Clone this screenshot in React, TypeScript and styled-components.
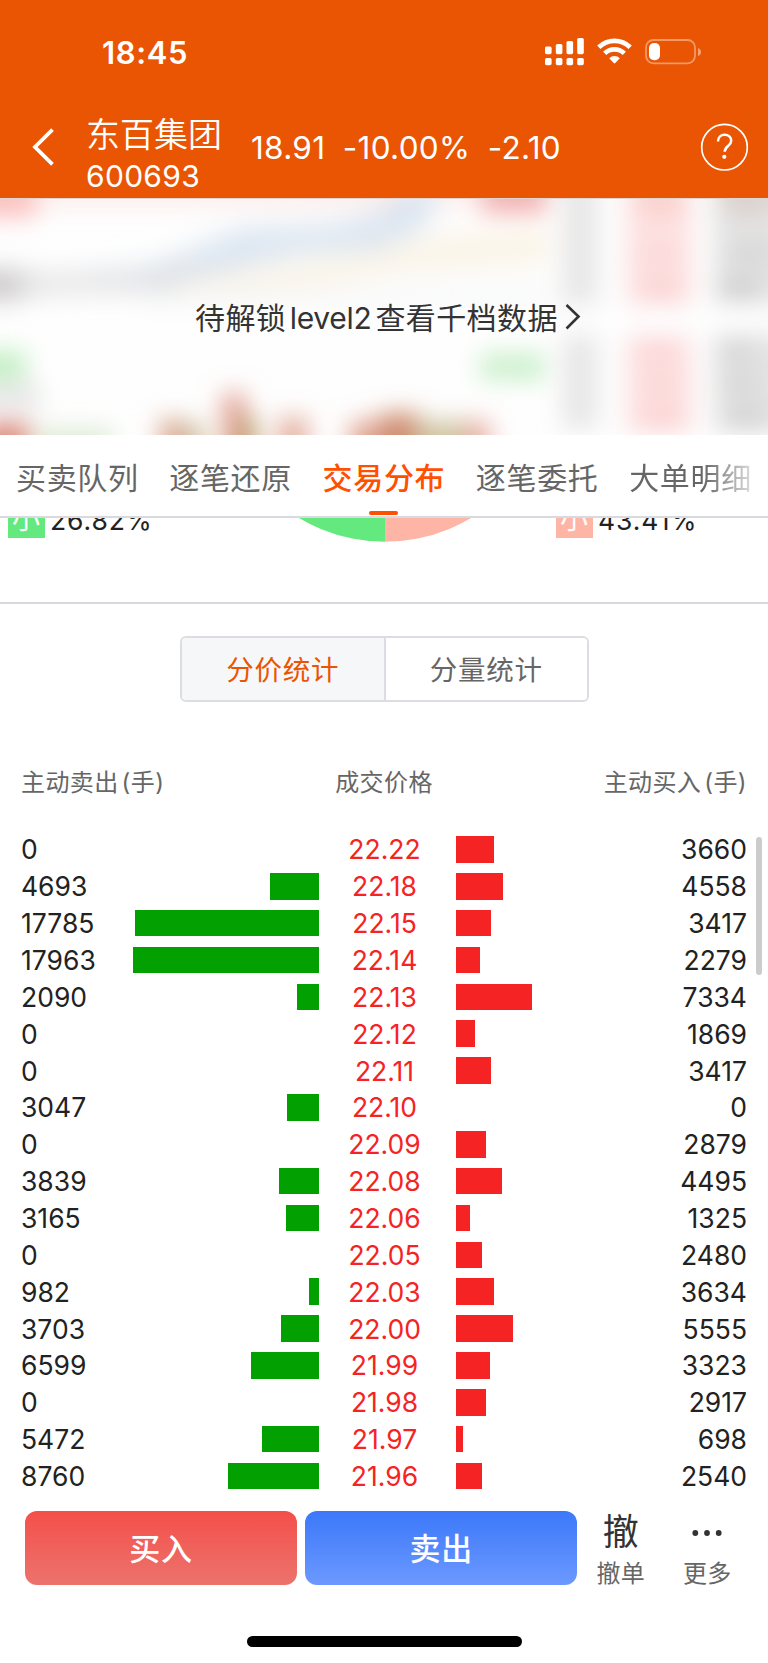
import React from 'react';
import styled, { createGlobalStyle, css } from 'styled-components';

const GlobalStyle = createGlobalStyle`
  * { box-sizing: border-box; }
  body {
    margin: 0;
    background: #fff;
    font-family: Inter, "Noto Sans CJK SC", sans-serif;
    color: #222;
  }
`;

const Screen = styled.main`
  width: 768px;
  height: 1663px;
  display: flex;
  flex-direction: column;
  overflow: hidden;
  background: #fff;
  white-space: nowrap;
`;

/* ---------- header ---------- */

const Header = styled.header`
  flex: none;
  height: 199px;
  background: #ea5504;
  border-bottom: 1px solid #dcd5d3;
  color: #fff;
`;

const StatusBar = styled.div`
  height: 98px;
  padding: 8px 66px 0 102px;
  display: flex;
  align-items: center;
  justify-content: space-between;
`;

const Clock = styled.time`
  font-size: 31px;
  font-weight: 600;
  line-height: 40px;
  letter-spacing: 0.6px;
`;

const StatusIcons = styled.svg`
  display: block;
  margin-top: -3px;
`;

const NavBar = styled.div`
  height: 100px;
  padding: 0 20px 0 32px;
  display: flex;
  align-items: center;
`;

const TitleBlock = styled.div`
  width: 164px;
  margin-left: 31px;
  padding-top: 14px;
`;

const StockName = styled.div`
  font-size: 34px;
  font-weight: 350;
  line-height: 41px;
`;

const StockCode = styled.div`
  font-size: 30px;
  line-height: 42px;
  letter-spacing: 0.3px;
`;

const Quote = styled.div`
  flex: 1;
  display: flex;
  gap: 17.5px;
  padding-left: 1px;
  font-size: 31.5px;
  line-height: 40px;
  letter-spacing: 0.3px;
`;

/* ---------- locked level-2 banner ---------- */

const Locked = styled.section`
  flex: none;
  height: 236px;
  display: grid;
  overflow: hidden;
  > * { grid-area: 1 / 1; }
`;

const LockedLabel = styled.div`
  position: relative;
  display: flex;
  align-items: center;
  gap: 7px;
  padding: 0 0 2px 195px;
  font-size: 30px;
  letter-spacing: 0.4px;
  color: #333;
`;

const Latin = styled.span`
  margin: 0 4px 0 3.5px;
  letter-spacing: -0.3px;
`;

/* ---------- tabs ---------- */

const Tabs = styled.nav`
  flex: none;
  height: 83px;
  padding: 0 16px;
  display: flex;
  gap: 30.6px;
  border-bottom: 2px solid #d9d9e0;
  overflow: hidden;
`;

const Tab = styled.div<{ $active?: boolean; $fading?: boolean }>`
  flex: none;
  display: flex;
  flex-direction: column;
  align-items: center;
  justify-content: space-between;
  padding-top: 17px;
  font-size: 30px;
  line-height: 52px;
  letter-spacing: 0.67px;
  color: #666;
  ${p => p.$active && css`
    color: #ff4f00;
    font-weight: 500;
    &::after {
      content: '';
      width: 29px;
      height: 4px;
      margin-bottom: 1px;
      border-radius: 2px;
      background: #ff4f00;
    }
  `}
  ${p => p.$fading && css`
    color: transparent;
    background: linear-gradient(90deg, #666 60%, #ddd 100%);
    background-clip: text;
    -webkit-background-clip: text;
  `}
`;

/* ---------- pie remainder ---------- */

const Distribution = styled.section`
  flex: none;
  height: 86px;
  display: flex;
  overflow: hidden;
  border-bottom: 2px solid #d8d9de;
  padding-left: 8px;
`;

const Legend = styled.div`
  display: flex;
  gap: 5px;
  width: 142px;
  height: 37px;
  margin-top: -17px;
  font-size: 26.5px;
  line-height: 39px;
  letter-spacing: 0.9px;
`;

const Swatch = styled.span<{ $color: string }>`
  flex: none;
  width: 37px;
  height: 37px;
  text-align: center;
  color: #fff;
  font-size: 28px;
  line-height: 37px;
  background: ${p => p.$color};
`;

const Pie = styled.svg`
  flex: none;
  margin: 0 85.5px 0 147.5px;
`;

/* ---------- segmented control ---------- */

const Segmented = styled.div`
  flex: none;
  width: 409px;
  height: 66px;
  margin: 32px 0 0 180px;
  display: flex;
  border: 2px solid #dcdde3;
  border-radius: 6px;
  overflow: hidden;
`;

const Segment = styled.div<{ $active?: boolean }>`
  flex: 1;
  text-align: center;
  font-size: 27.5px;
  line-height: 64px;
  letter-spacing: 0.7px;
  color: ${p => (p.$active ? '#ea5504' : '#666')};
  background: ${p => (p.$active ? '#f6f7f9' : '#fff')};
  & + & { border-left: 2px solid #dcdde3; }
`;

/* ---------- table ---------- */

const TableHead = styled.div`
  flex: none;
  height: 129px;
  padding: 61px 21px 0 21px;
  display: grid;
  grid-template-columns: 1fr auto 1fr;
  font-size: 24px;
  line-height: 40px;
  letter-spacing: 0.4px;
  color: #666;
  > :last-child { text-align: right; }
`;

const Unit = styled.span`
  margin-left: 3px;
`;

const TableBody = styled.div`
  flex: none;
  position: relative;
`;

const Row = styled.div`
  height: 36.87px;
  padding: 0 21px;
  display: grid;
  grid-template-columns: 90px 208px 131px 1fr 100px;
  align-items: center;
  font-size: 26.5px;
  line-height: 36px;
`;

const Price = styled.span`
  text-align: center;
  color: #f52323;
`;

const Volume = styled.span<{ $right?: boolean }>`
  text-align: ${p => (p.$right ? 'right' : 'left')};
`;

const Bar = styled.i<{ $side: 'sell' | 'buy' }>`
  height: 26.5px;
  justify-self: ${p => (p.$side === 'sell' ? 'end' : 'start')};
  margin-left: ${p => (p.$side === 'buy' ? '6px' : '0')};
  background: ${p => (p.$side === 'sell' ? '#02a000' : '#f52323')};
`;

const ScrollThumb = styled.div`
  position: absolute;
  top: 6px;
  right: 6px;
  width: 6px;
  height: 138px;
  border-radius: 3px;
  background: #ccc;
`;

/* ---------- bottom actions ---------- */

const Actions = styled.footer`
  flex: none;
  margin-top: 17px;
  padding-left: 25px;
  height: 74px;
  display: flex;
`;

const TradeButton = styled.button<{ $from: string; $to: string }>`
  width: 272px;
  margin: 0 8.3px 0 0;
  padding: 0;
  border: 0;
  border-radius: 12px;
  font: 500 31px/75px Inter, "Noto Sans CJK SC", sans-serif;
  letter-spacing: 0.8px;
  color: #fff;
  background: linear-gradient(${p => p.$from}, ${p => p.$to});
`;

const Tool = styled.div`
  width: 86.5px;
  display: flex;
  flex-direction: column;
  align-items: center;
  font-size: 24px;
  line-height: 40px;
  letter-spacing: 0.3px;
  color: #666;
  margin-left: -8px;
  & + & { margin-left: 0; }
`;

const ToolGlyph = styled.div`
  flex: none;
  height: 43px;
  line-height: 45px;
  display: flex;
  align-items: center;
  font-size: 36px;
  color: #333;
`;

const HomeIndicator = styled.div`
  flex: none;
  width: 275px;
  height: 10.5px;
  margin: 51px 0 0 247px;
  border-radius: 6px;
  background: #000;
`;

type Trade = [sell: number, price: string, buy: number];

const trades: Trade[] = [
  [0, '22.22', 3660],
  [4693, '22.18', 4558],
  [17785, '22.15', 3417],
  [17963, '22.14', 2279],
  [2090, '22.13', 7334],
  [0, '22.12', 1869],
  [0, '22.11', 3417],
  [3047, '22.10', 0],
  [0, '22.09', 2879],
  [3839, '22.08', 4495],
  [3165, '22.06', 1325],
  [0, '22.05', 2480],
  [982, '22.03', 3634],
  [3703, '22.00', 5555],
  [6599, '21.99', 3323],
  [0, '21.98', 2917],
  [5472, '21.97', 698],
  [8760, '21.96', 2540],
];

const PX_PER_LOT = 185.8 / 17963;

const BlurredChart = () => (
  <svg width="768" height="236" viewBox="0 0 768 236">
    <defs>
      <filter id="soft" x="-20%" y="-20%" width="140%" height="140%">
        <feGaussianBlur stdDeviation="14" />
      </filter>
      <filter id="cell" x="-20%" y="-20%" width="140%" height="140%">
        <feGaussianBlur stdDeviation="12" />
      </filter>
    </defs>
    <rect width="768" height="236" fill="#fefefe" />
    <g filter="url(#soft)">
      <path d="M-30 -16H560V2H-30z" fill="#fbe3df" />
      <path d="M-30 72L60 78L150 68L190 52L240 30L330 26L380 14L410 -12L440 -12L425 28L380 50L300 54L200 78L60 92L-30 96z" fill="#d9e4f0" />
      <path d="M-30 78H150L200 70L170 90H-30z" fill="#d8d6d6" />
      <path d="M-30 74H22V98H-30z" fill="#bfbaba" />
      <path d="M190 78L300 66L390 50L440 38L550 30V62L400 72L300 88L180 94z" fill="#faf3e4" />
      <path d="M150 106H560V90H150z" fill="#f6f7f8" />
    </g>
    <g filter="url(#cell)">
      <rect x="-30" y="-30" width="66" height="48" fill="#fbc3c1" />
      <rect x="482" y="-30" width="64" height="44" fill="#f2b4b4" />
      <rect x="-30" y="152" width="56" height="29" fill="#c2efc3" />
      <rect x="480" y="154" width="66" height="27" fill="#cbf0cc" />
      <rect x="-20" y="184" width="60" height="26" fill="#e6e6e6" />
      <rect x="-20" y="222" width="50" height="50" fill="#dd9385" />
      <rect x="36" y="230" width="76" height="30" fill="#dcead4" />
      <path d="M160 220h22v60h-22z" fill="#dba793" />
      <path d="M182 224h22v60h-22z" fill="#cfc3a4" />
      <path d="M222 194h24v90h-24z" fill="#e3a698" />
      <path d="M238 218h18v60h-18z" fill="#b89b66" />
      <path d="M278 218h30v60h-30z" fill="#e4b1a2" />
      <path d="M350 222h32v60h-32z" fill="#e0a593" />
      <path d="M380 214h40v70h-40z" fill="#cf8c70" />
      <path d="M416 222h50v60h-50z" fill="#cfc5a3" />
      <path d="M466 222h24v60h-24z" fill="#ebafa7" />
    </g>
    <g filter="url(#cell)">
      <path d="M562 -30h36v136h-36zM562 136h36v94h-36z" fill="#e8e7e7" />
      <path d="M626 -30h66v136h-66zM626 138h66v95h-66z" fill="#fde3e3" />
      <path d="M714 -30h90v134h-90zM714 136h90v97h-90z" fill="#e4e4e4" />
      <rect x="637" y="-30" width="46" height="50" fill="#fbd3cf" />
      <rect x="637" y="47" width="44" height="17" fill="#fcd4d4" />
      <rect x="640" y="81" width="42" height="17" fill="#fccdcf" />
      <rect x="636" y="142" width="44" height="17" fill="#fcd0d2" />
      <rect x="640" y="176" width="44" height="17" fill="#fcd2d2" />
      <rect x="640" y="210" width="44" height="17" fill="#fccccd" />
      <rect x="720" y="-30" width="54" height="47" fill="#dcd2cd" />
      <rect x="728" y="46" width="44" height="17" fill="#d2d2d2" />
      <rect x="720" y="81" width="40" height="17" fill="#c8c8c8" />
      <rect x="718" y="143" width="38" height="17" fill="#d2d2d2" />
      <rect x="720" y="176" width="40" height="17" fill="#d3d3d3" />
      <rect x="726" y="210" width="40" height="17" fill="#cccccc" />
    </g>
  </svg>
);

const App = () => (
  <>
    <GlobalStyle />
    <Screen>
      <Header>
        <StatusBar>
          <Clock>18:45</Clock>
          <StatusIcons width="157" height="30" viewBox="0 0 157 30" fill="#fff">
            <rect x="0" y="9.6" width="6.6" height="7.6" rx="1.6" />
            <rect x="10.8" y="7" width="6.6" height="10.2" rx="1.6" />
            <rect x="21.5" y="4" width="6.6" height="13.2" rx="1.6" />
            <rect x="32.2" y="1" width="6.6" height="16.2" rx="1.6" />
            <rect x="0" y="21" width="6.6" height="7.2" rx="1.6" />
            <rect x="10.8" y="21" width="6.6" height="7.2" rx="1.6" />
            <rect x="21.5" y="21" width="6.6" height="7.2" rx="1.6" />
            <rect x="32.2" y="21" width="6.6" height="7.2" rx="1.6" />
            <g fill="none" stroke="#fff" strokeWidth="4.7">
              <path d="M53.8 10.2a22.4 22.4 0 0 1 31.4 0" />
              <path d="M59.7 16.4a14 14 0 0 1 19.6 0" />
            </g>
            <path d="M64.2 21.2a7.8 7.8 0 0 1 10.6 0l-4.5 4.9q-.8.8-1.6 0z" />
            <rect x="101" y="3" width="49" height="23.3" rx="7.5" fill="none" stroke="#fff" strokeOpacity=".4" strokeWidth="1.8" />
            <rect x="104" y="6" width="11" height="17.3" rx="5" />
            <path d="M153 11q3 1 3 4t-3 4z" opacity=".45" />
          </StatusIcons>
        </StatusBar>
        <NavBar>
          <svg width="23" height="40" viewBox="0 0 23 40" fill="none" stroke="#fff" strokeWidth="3.8">
            <path d="M20.5 1.6L3 19L20.5 36.4" />
          </svg>
          <TitleBlock>
            <StockName>东百集团</StockName>
            <StockCode>600693</StockCode>
          </TitleBlock>
          <Quote>
            <span>18.91</span>
            <span>-10.00%</span>
            <span>-2.10</span>
          </Quote>
          <svg width="48" height="50" viewBox="0 0 48 50" fill="none" stroke="#fff">
            <circle cx="24.5" cy="24.2" r="22.8" strokeWidth="1.7" />
            <path d="M18 18.5c0-4.2 2.7-6.8 6.6-6.8s6.6 2.5 6.6 6c0 5.3-6.5 5.300-6.500 11" strokeWidth="2.5" />
            <circle cx="24.3" cy="33.8" r="2.1" fill="#fff" stroke="none" />
          </svg>
        </NavBar>
      </Header>

      <Locked>
        <BlurredChart />
        <LockedLabel>
          <div>待解锁<Latin>level2</Latin>查看千档数据</div>
          <svg width="16" height="27" viewBox="0 0 16 27" fill="none" stroke="#333" strokeWidth="2.6">
            <path d="M1.5 2L13.5 13.5L1.5 25.5" />
          </svg>
        </LockedLabel>
      </Locked>

      <Tabs>
        <Tab>买卖队列</Tab>
        <Tab>逐笔还原</Tab>
        <Tab $active>交易分布</Tab>
        <Tab>逐笔委托</Tab>
        <Tab $fading>大单明细</Tab>
      </Tabs>

      <Distribution>
        <Legend><Swatch $color="#64e97e">小</Swatch>26.82%</Legend>
        <Pie width="173" height="25" viewBox="298 518 173 25">
          <path d="M385 205.7a168 168 0 0 0 0 336z" fill="#64e97e" />
          <path d="M385 205.7a168 168 0 0 1 0 336z" fill="#ffb5a5" />
        </Pie>
        <Legend><Swatch $color="#ffb5a5">小</Swatch>43.41%</Legend>
      </Distribution>

      <Segmented>
        <Segment $active>分价统计</Segment>
        <Segment>分量统计</Segment>
      </Segmented>

      <TableHead>
        <div>主动卖出<Unit>(手)</Unit></div>
        <div>成交价格</div>
        <div>主动买入<Unit>(手)</Unit></div>
      </TableHead>
      <TableBody>
        {trades.map(([sell, price, buy]) => (
          <Row key={price}>
            <Volume>{sell}</Volume>
            <Bar $side="sell" style={{ width: sell * PX_PER_LOT }} />
            <Price>{price}</Price>
            <Bar $side="buy" style={{ width: buy * PX_PER_LOT }} />
            <Volume $right>{buy}</Volume>
          </Row>
        ))}
        <ScrollThumb />
      </TableBody>

      <Actions>
        <TradeButton $from="#f44f4a" $to="#ec736d">买入</TradeButton>
        <TradeButton $from="#3b78f9" $to="#6c99ff">卖出</TradeButton>
        <Tool><ToolGlyph>撤</ToolGlyph>撤单</Tool>
        <Tool>
          <ToolGlyph>
            <svg width="30" height="6" viewBox="0 0 30 6" fill="#333">
              <circle cx="3.3" cy="3" r="2.9" />
              <circle cx="15" cy="3" r="2.9" />
              <circle cx="26.7" cy="3" r="2.9" />
            </svg>
          </ToolGlyph>
          更多
        </Tool>
      </Actions>
      <HomeIndicator />
    </Screen>
  </>
);

export default App;
